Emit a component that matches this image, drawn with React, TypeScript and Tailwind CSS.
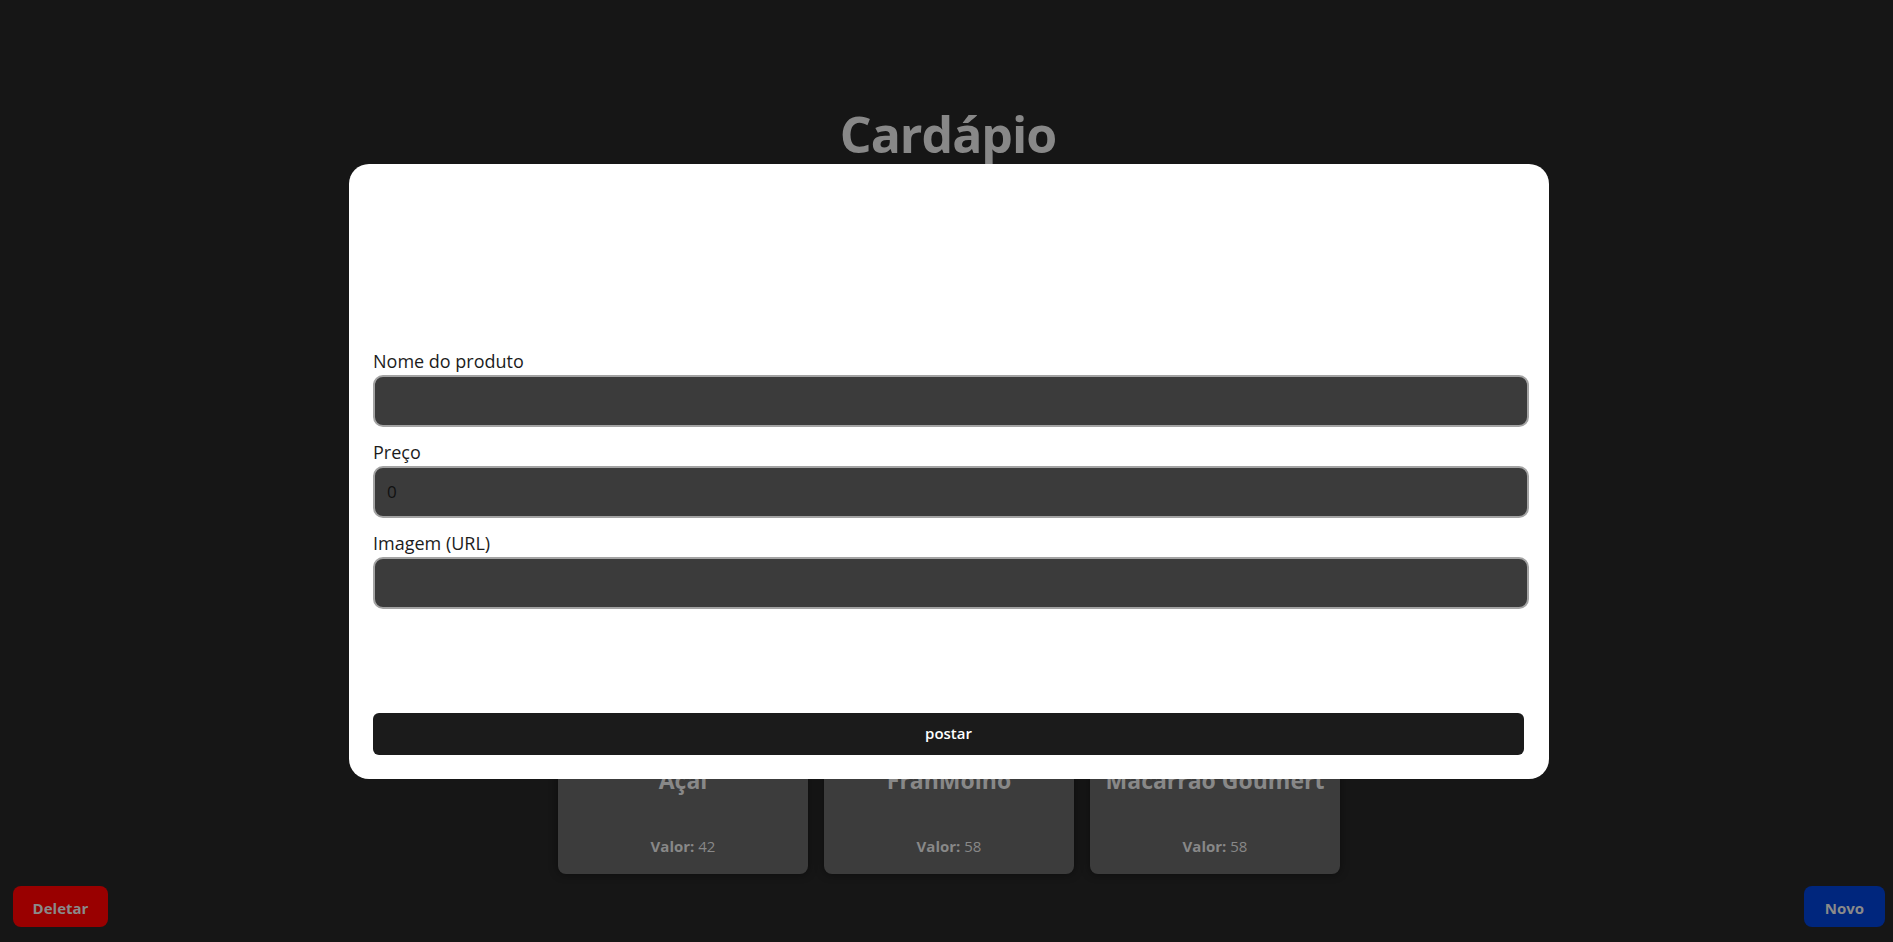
import React from "react";

const items = [
  { nome: "Açaí", valor: 42 },
  { nome: "FranMolho", valor: 58 },
  { nome: "Macarrão Goumert", valor: 58 },
];

export default function App() {
  return (
    <div
      className="min-h-screen w-full bg-[#161616] flex flex-col items-center"
      style={{ fontFamily: '"Open Sans", "Noto Sans", sans-serif' }}
    >
      <h1 className="mt-[104px] ml-[3px] text-[50px] leading-[60px] font-bold tracking-[-1px] text-[#888888]">
        Cardápio
      </h1>

      <div className="mt-[395px] ml-[5px] grid grid-cols-3 gap-4">
        {items.map((it) => (
          <div
            key={it.nome}
            className="w-[250px] rounded-lg bg-[#3c3c3c] shadow-[0_0_10px_rgba(0,0,0,0.45)] flex flex-col items-center px-3 pt-4 pb-[18px]"
          >
            <div className="h-[174px] w-full rounded-md bg-[#343434]" />
            <div className="mt-4 text-[23px] leading-[30px] font-bold text-[#888888] whitespace-nowrap">
              {it.nome}
            </div>
            <div className="mt-[41px] text-[15px] leading-5 text-[#888888]">
              <span className="font-bold">Valor:</span> {it.valor}
            </div>
          </div>
        ))}
      </div>

      <button className="fixed left-[13px] bottom-[15px] h-[41px] w-[95px] rounded-lg bg-[#990000] pt-[3px] text-[15px] font-bold text-[#8a8a8a]">
        Deletar
      </button>
      <button className="fixed right-[8px] bottom-[15px] h-[41px] w-[81px] rounded-lg bg-[#00267d] pt-[3px] text-[15px] font-bold text-[#8a8a8a]">
        Novo
      </button>

      <div className="fixed inset-0 flex items-center justify-center">
        <div className="ml-[5px] w-[1200px] h-[615px] rounded-[20px] bg-white flex flex-col pl-6 pr-5 pb-6">
          <div className="h-[185px] shrink-0" />
          <div className="flex flex-col">
            <label className="text-[18px] leading-6 font-medium text-[#1c1c1c]">Nome do produto</label>
            <input
              type="text"
              className="mt-[2px] h-[52px] w-full rounded-[10px] border-2 border-[#a3a3a3] bg-[#3b3b3b] px-3 text-[17px] text-[#111] outline-none"
            />
            <label className="mt-[13px] text-[18px] leading-6 font-medium text-[#1c1c1c]">Preço</label>
            <input
              type="number"
              defaultValue={0}
              className="mt-[2px] h-[52px] w-full rounded-[10px] border-2 border-[#a3a3a3] bg-[#3b3b3b] px-3 text-[17px] text-[#111] outline-none"
            />
            <label className="mt-[13px] text-[18px] leading-6 font-medium text-[#1c1c1c]">Imagem (URL)</label>
            <input
              type="text"
              className="mt-[2px] h-[52px] w-full rounded-[10px] border-2 border-[#a3a3a3] bg-[#3b3b3b] px-3 text-[17px] text-[#111] outline-none"
            />
          </div>
          <div className="flex-1" />
          <button className="h-[42px] w-[1151px] rounded-md bg-[#1b1b1b] text-[15px] font-semibold text-white">
            postar
          </button>
        </div>
      </div>
    </div>
  );
}
